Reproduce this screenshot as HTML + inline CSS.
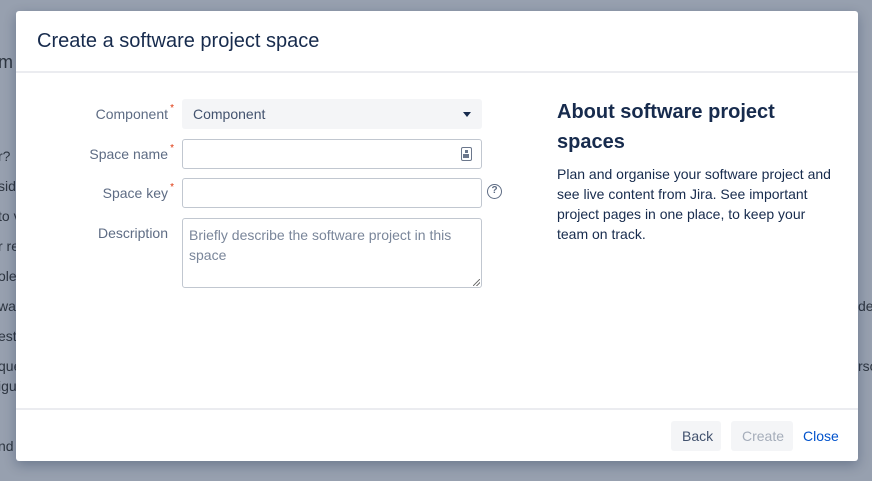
<!DOCTYPE html>
<html><head><meta charset="utf-8"><style>
*{box-sizing:border-box}
body{margin:0;width:872px;height:481px;overflow:hidden;background:#97a0af;font-family:"Liberation Sans",sans-serif;position:relative}
.bg{position:absolute;color:#2d3540;font-size:14px}
.dlg{position:absolute;left:16px;top:11px;width:842px;height:450px;background:#fff;border-radius:3px;box-shadow:0 4px 12px rgba(9,30,66,.3)}
.title{position:absolute;left:21px;top:19px;font-size:20px;color:#172b4d}
.hr1{position:absolute;left:0;right:0;top:60px;height:2px;background:#ebecf0}
.hr2{position:absolute;left:0;right:0;top:397px;height:2px;background:#ebecf0}
.lbl{position:absolute;right:690px;font-size:14px;color:#5e6c84;text-align:right;white-space:nowrap}
.lbl sup{color:#de350b;font-size:10px;position:absolute;right:-6px;top:-3px}
.inp{position:absolute;left:166px;width:300px;border:1px solid #c1c7d0;border-radius:3px;background:#fff}
.sel{position:absolute;left:166px;top:88px;width:300px;height:30px;background:#f4f5f7;border-radius:3px;font-size:14px;color:#42526e;padding:7px 11px}
.arr{position:absolute;right:11px;top:13px;border:4px solid transparent;border-top:5px solid #172b4d;border-bottom:0}
.h2{position:absolute;left:541px;top:86px;font-size:20px;font-weight:bold;color:#172b4d;line-height:30px;width:260px}
.p{position:absolute;left:541px;top:153px;font-size:14px;color:#172b4d;line-height:20px;width:278px}
.btn{position:absolute;top:410px;height:30px;border-radius:3px;background:#f4f5f7;font-size:14px;padding:7px 11px}
</style></head><body>
<div class="bg" style="left:-2px;top:52px;font-size:18px">m</div>
<div class="bg" style="left:-2px;top:148px">r?</div>
<div class="bg" style="left:-2px;top:178px">side</div>
<div class="bg" style="left:-2px;top:208px">to v</div>
<div class="bg" style="left:-2px;top:238px">r re</div>
<div class="bg" style="left:-2px;top:268px">oles</div>
<div class="bg" style="left:-2px;top:298px">wa</div>
<div class="bg" style="left:-2px;top:328px">est</div>
<div class="bg" style="left:-2px;top:358px">que</div>
<div class="bg" style="left:-2px;top:378px">igu</div>
<div class="bg" style="left:-2px;top:438px">nd</div>
<div class="bg" style="left:858px;top:298px">de</div>
<div class="bg" style="left:858px;top:358px">rso</div>
<div class="dlg">
<div class="title">Create a software project space</div>
<div class="hr1"></div>
<div class="lbl" style="top:95px">Component<sup>*</sup></div>
<div class="sel">Component<div class="arr"></div></div>
<div class="lbl" style="top:135px">Space name<sup>*</sup></div>
<div class="inp" style="top:128px;height:30px"><div style="position:absolute;right:9px;top:7px;width:11px;height:14px;border:1.5px solid #6b778c;border-radius:2px"><div style="position:absolute;left:3px;top:2px;width:3px;height:3px;background:#6b778c"></div><div style="position:absolute;left:1px;top:6px;width:6px;height:4px;background:#6b778c"></div></div></div>
<div class="lbl" style="top:174px">Space key<sup>*</sup></div>
<div class="inp" style="top:167px;height:30px"></div>
<div style="position:absolute;left:471px;top:173px;width:15px;height:15px;border:1.5px solid #5e6c84;border-radius:50%;font-size:10px;font-weight:bold;color:#5e6c84;text-align:center;line-height:12px">?</div>
<div class="lbl" style="top:214px">Description</div>
<div class="inp" style="top:207px;height:70px;font-size:14px;color:#7a869a;padding:6px 6px;line-height:20px">Briefly describe the software project in this space<div style="position:absolute;right:1px;bottom:1px;width:7px;height:7px;background:linear-gradient(135deg,transparent 45%,#777 45%,#777 55%,transparent 55%,transparent 70%,#777 70%,#777 80%,transparent 80%)"></div></div>
<div class="h2">About software project spaces</div>
<div class="p">Plan and organise your software project and see live content from Jira. See important project pages in one place, to keep your team on track.</div>
<div class="hr2"></div>
<div class="btn" style="left:655px;width:50px;color:#42526e">Back</div>
<div class="btn" style="left:715px;width:62px;color:#a5adba">Create</div>
<div style="position:absolute;left:787px;top:417px;font-size:14px;color:#0052cc">Close</div>
</div>
</body></html>
